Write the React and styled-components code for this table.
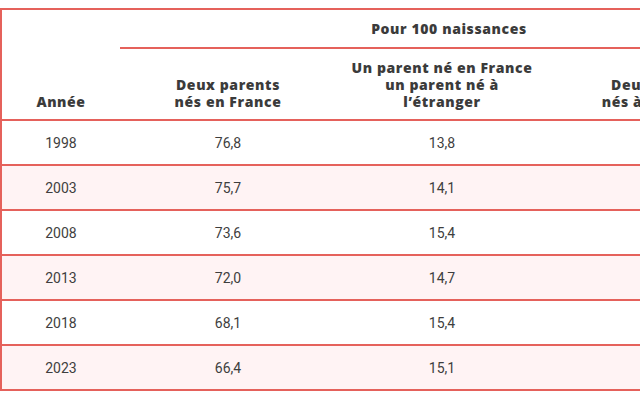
import React from "react";
import styled, { createGlobalStyle } from "styled-components";

const Global = createGlobalStyle`
  html, body { margin: 0; padding: 0; background: #fff; overflow: hidden; }
  body { width: 640px; height: 400px; }
`;

const Wrap = styled.div`
  padding-top: 8px;
  width: 800px;
`;

const Table = styled.table`
  border-collapse: collapse;
  width: 777px;
  table-layout: fixed;
  border: 2px solid #e5615b;
  border-right: none;
`;

const Th = styled.th`
  font-family: "Open Sans", "Noto Sans", sans-serif;
  font-weight: 800;
  font-size: 14px;
  line-height: 17px;
  letter-spacing: 0.6px;
  color: #3b3b3b;
  text-align: center;
  vertical-align: bottom;
  padding: 0 4px 10px;
  border-bottom: ${(p) => (p.$line ? "2px solid #e5615b" : "none")};
`;

const GroupTh = styled(Th)`
  height: 36px;
  padding: 0 0 1px;
  vertical-align: middle;
`;

const SubTh = styled(Th)`
  height: 61px;
  padding-bottom: 9px;
  border-bottom: 2px solid #e5615b;
`;

const Tr = styled.tr`
  background: ${(p) => (p.$alt ? "#fff3f4" : "#ffffff")};
  border-bottom: 2px solid #e5615b;
`;

const Td = styled.td`
  font-family: Roboto, "Liberation Sans", sans-serif;
  font-size: 14px;
  color: #3e3e3e;
  text-align: center;
  height: 43px;
  padding: 0;
`;

const rows = [
  ["1998", "76,8", "13,8", "9,4"],
  ["2003", "75,7", "14,1", "10,2"],
  ["2008", "73,6", "15,4", "11,0"],
  ["2013", "72,0", "14,7", "13,3"],
  ["2018", "68,1", "15,4", "16,5"],
  ["2023", "66,4", "15,1", "18,5"],
];

export default function App() {
  return (
    <>
      <Global />
      <Wrap>
        <Table>
          <colgroup>
            <col style={{ width: 119 }} />
            <col style={{ width: 216 }} />
            <col style={{ width: 212 }} />
            <col style={{ width: 230 }} />
          </colgroup>
          <thead>
            <tr>
              <SubTh rowSpan={2}>Année</SubTh>
              <GroupTh colSpan={3} $line>
                Pour 100 naissances
              </GroupTh>
            </tr>
            <tr>
              <SubTh>
                Deux parents
                <br />
                nés en France
              </SubTh>
              <SubTh>
                Un parent né en France
                <br />
                un parent né à
                <br />
                l’étranger
              </SubTh>
              <SubTh>
                Deux parents
                <br />
                nés à l’étranger
              </SubTh>
            </tr>
          </thead>
          <tbody>
            {rows.map((r, i) => (
              <Tr key={r[0]} $alt={i % 2 === 1}>
                {r.map((c, j) => (
                  <Td key={j}>{c}</Td>
                ))}
              </Tr>
            ))}
          </tbody>
        </Table>
      </Wrap>
    </>
  );
}
